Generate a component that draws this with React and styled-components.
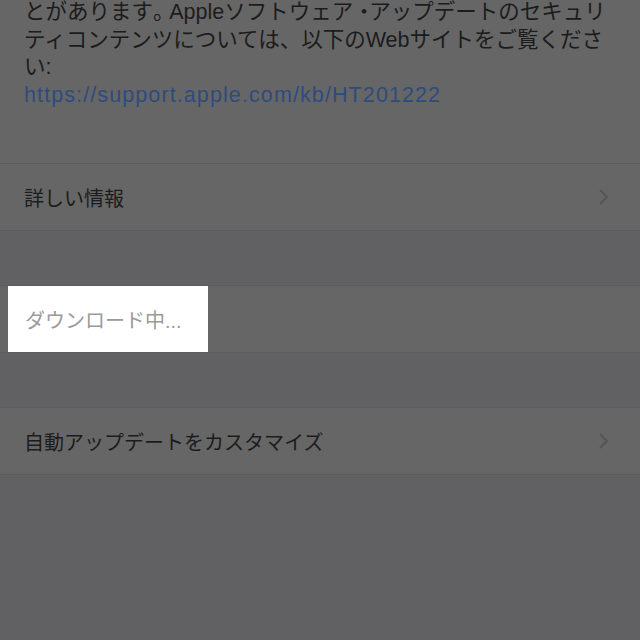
import styled, { createGlobalStyle } from "styled-components";

const GlobalStyle = createGlobalStyle`
  html, body {
    margin: 0;
    padding: 0;
    background: #616163;
  }
  body {
    font-family: "Liberation Sans", "Noto Sans CJK JP", sans-serif;
    -webkit-font-smoothing: antialiased;
  }
`;

const Screen = styled.div`
  width: 640px;
  height: 640px;
  overflow: hidden;
  background: #616163;
  display: flex;
  flex-direction: column;
`;

const Section = styled.div`
  background: #666666;
  border-top: ${(p) => (p.$top ? "1px solid #5c5c5c" : "none")};
  border-bottom: 1px solid #5c5c5c;
  margin-top: ${(p) => p.$gap || 0}px;
`;

const Description = styled.div`
  padding: 0 24px 54px;
  font-size: 21.5px;
  line-height: 27.5px;
  color: #1c1c1c;
  white-space: nowrap;
  margin-top: -1px;
`;

/* iOS squeezes full-width punctuation a little */
const Punct = styled.span`
  letter-spacing: -0.25em;
`;

const Link = styled.span`
  color: #2d4c7e;
  letter-spacing: 1.1px;
`;

const Separator = styled.div`
  height: 1px;
  background: #5c5c5c;
`;

const Row = styled.div`
  height: 66px;
  display: flex;
  align-items: center;
  justify-content: space-between;
  padding: 0 30px 0 24px;
  font-size: 20px;
  color: #1c1c1c;
`;

const Highlight = styled.div`
  height: 66px;
  width: 200px;
  margin-left: 8px;
  background: #ffffff;
  display: flex;
  align-items: center;
  padding-left: 17px;
  box-sizing: border-box;
  font-size: 20px;
  color: #9a9a9a;
`;

const Chevron = () => (
  <svg width="12" height="18" viewBox="0 0 12 18">
    <path d="M2 2 L9 9 L2 16" fill="none" stroke="#555555" strokeWidth="2" />
  </svg>
);

export default function App() {
  return (
    <>
      <GlobalStyle />
      <Screen>
        <Section>
          <Description>
            とがあります<Punct>。</Punct>Appleソフトウェア<Punct>・</Punct>アップデートのセキュリ
            <br />
            ティコンテンツについては、以下のWebサイトをご覧くださ
            <br />
            い:
            <br />
            <Link>https://support.apple.com/kb/HT201222</Link>
          </Description>
          <Separator />
          <Row>
            <span>詳しい情報</span>
            <Chevron />
          </Row>
        </Section>
        <Section $top $gap={54}>
          <Highlight>ダウンロード中...</Highlight>
        </Section>
        <Section $top $gap={54}>
          <Row>
            <span>自動アップデートをカスタマイズ</span>
            <Chevron />
          </Row>
        </Section>
      </Screen>
    </>
  );
}
